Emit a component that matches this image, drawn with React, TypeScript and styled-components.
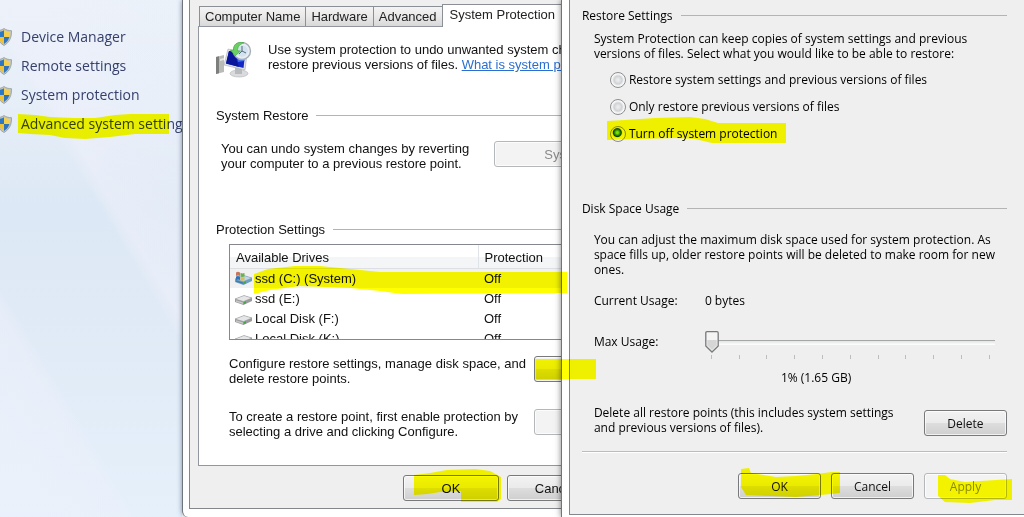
import React, { useState } from "react";
import styled, { createGlobalStyle, css } from "styled-components";

const GlobalStyle = createGlobalStyle`
  *, *::before, *::after { box-sizing: border-box; }
  html, body { margin: 0; padding: 0; background: #fff; }
  body { overflow-x: hidden; }
`;

const arial = `"Liberation Sans", Arial, sans-serif`;
const tahoma = `"Open Sans", Tahoma, sans-serif`;
const segoe = `"Open Sans", "Segoe UI", sans-serif`;

const Desktop = styled.div`
  display: grid;
  grid-template-columns: 182px minmax(0, 9fr) minmax(0, 11fr);
  min-height: 100vh;
  overflow: hidden;
`;

/* ---------- highlighter strokes ---------- */

const Stroke = styled.svg<{ $x: number; $y: number }>`
  position: absolute;
  left: ${(p) => p.$x}px;
  top: ${(p) => p.$y}px;
  z-index: 3;
  mix-blend-mode: multiply;
  pointer-events: none;
`;

function Highlight({ x, y, w, h, points }: { x: number; y: number; w: number; h: number; points: string }) {
  return (
    <Stroke $x={x} $y={y} width={w} height={h} viewBox={`0 0 ${w} ${h}`} aria-hidden="true">
      <polygon points={points} fill="#ffff00" />
    </Stroke>
  );
}

/* ---------- control panel sidebar ---------- */

const Sidebar = styled.nav`
  padding: 22px 0 0;
  background:
    linear-gradient(59deg, rgba(236, 241, 251, 0.8) 10%, rgba(236, 240, 250, 0.6) 25%, transparent 28%, transparent 58%, rgba(238, 240, 250, 0.6) 61%, rgba(238, 242, 251, 0.2) 90%),
    linear-gradient(180deg, #ebf1f9 0%, #e6eef8 20%, #dce8f5 40%, #e0eaf6 60%, #e5f0fb 100%);
  font-family: ${segoe};
`;

const TaskList = styled.ul`
  list-style: none;
  margin: 0;
  padding: 0;
`;

const Task = styled.li`
  position: relative;
  display: flex;
  align-items: center;
  gap: 9px;
  height: 29px;

  svg:first-child {
    flex: none;
    margin-left: -4px;
  }
`;

const TaskLink = styled.a`
  color: #35406c;
  font-size: 14px;
  line-height: 20px;
  text-decoration: none;
  white-space: nowrap;
`;

function Shield() {
  return (
    <svg width="16" height="18" viewBox="0 0 16 18" aria-hidden="true">
      <path d="M8 .5 C10 2 12.500 2.600 15.500 2.700 C15.700 9 14 14 8 17.500 C2 14 .3 9 .5 2.700 C3.500 2.600 6 2 8 .5Z" fill="#c4c6be" stroke="#8d938f" strokeWidth=".7" />
      <path d="M8 2.200 C6.200 3.400 4.300 4 2 4.100 C2 6 2.100 7.500 2.600 9 H8Z" fill="#2d78c4" />
      <path d="M8 2.200 C9.800 3.400 11.700 4 14 4.100 C14 6 13.900 7.500 13.400 9 H8Z" fill="#f4d04e" />
      <path d="M2.600 9 C3.400 12 5 14.200 8 16 V9Z" fill="#f0c238" />
      <path d="M13.400 9 C12.600 12 11 14.200 8 16 V9Z" fill="#2f73bd" />
    </svg>
  );
}

/* ---------- window frames ---------- */

const Frame = styled.section<{ $front?: boolean }>`
  position: relative;
  background: #fff;
  border-left: 1px solid #6f757c;
  font-size: 13px;
  line-height: 15px;
  color: #111;
  ${(p) =>
    p.$front
      ? css`
          z-index: 2;
          padding: 0 0 2px 7px;
          box-shadow: 0 0 6px rgba(0, 0, 0, 0.5);
          font-family: ${tahoma};
          font-size: 12px;
          color: #000;
        `
      : css`
          padding: 0 0 7px 6px;
          border-bottom-left-radius: 6px;
          box-shadow: 0 0 5px rgba(50, 70, 100, 0.6);
          font-family: ${arial};
        `}
`;

const Client = styled.div<{ $inset?: boolean }>`
  background: #efefef;
  border-left: 1px solid #83868a;
  border-bottom: 1px solid #83868a;
  ${(p) =>
    p.$inset
      ? css`
          padding: 8px 17px 15px 12px;
        `
      : css`
          padding: 4px 0 7px 8px;
        `}
`;

/* The property sheet continues underneath the window in front of it. */
const Sheet = styled.div`
  width: calc(100% + 138px);
`;

const Tabs = styled.div`
  display: flex;
  align-items: flex-end;
  padding-left: 1px;
`;

const Tab = styled.button<{ $active?: boolean }>`
  height: 20px;
  margin: 0 -1px 0 0;
  padding: 0 5px;
  border: 1px solid #8b8f96;
  border-bottom: 0;
  background: linear-gradient(#f3f3f3, #e9e9e9 50%, #d8d8d8);
  font: 13px/18px ${arial};
  color: #222;
  white-space: nowrap;
  ${(p) =>
    p.$active &&
    css`
      position: relative;
      z-index: 1;
      height: 23px;
      margin-bottom: -1px;
      padding: 0 7px 2px;
      background: #fff;
    `}
`;

const TabPage = styled.div`
  padding: 15px 0 26px 17px;
  background: #fff;
  border: 1px solid #9296a0;
`;

const Intro = styled.div`
  display: flex;
  gap: 16px;
  white-space: nowrap;

  svg { flex: none; }
  p { margin: 0; }
  a { color: #2a6fd0; }
`;

const GroupTitle = styled.h2<{ $gap: number }>`
  display: flex;
  align-items: center;
  gap: 8px;
  margin: 0;
  padding-top: ${(p) => p.$gap}px;
  font-size: inherit;
  font-weight: normal;
  white-space: nowrap;

  &::after {
    content: "";
    flex: 1;
    height: 1px;
    background: #b4b4b4;
  }
`;

const ActionRow = styled.div<{ $indent: number; $gap: number; $align: "start" | "end" }>`
  display: flex;
  justify-content: space-between;
  align-items: flex-${(p) => p.$align};
  padding: ${(p) => p.$gap}px 0 0 ${(p) => p.$indent}px;

  p {
    margin: 0;
    white-space: nowrap;
  }
  button { margin-bottom: -1px; }
`;

const Button = styled.button<{ $wide?: boolean }>`
  position: relative;
  flex: none;
  width: ${(p) => (p.$wide ? 96 : 83)}px;
  height: 26px;
  padding: 0;
  border: 1px solid #77797b;
  border-radius: 3px;
  background: linear-gradient(#f2f2f2, #ebebeb 48%, #dddddd 52%, #cfcfcf);
  box-shadow: inset 0 0 0 1px rgba(255, 255, 255, 0.7);
  font: inherit;
  color: #111;

  &:disabled {
    border-color: #b5b8ba;
    background: #f3f3f3;
    color: #8a8a8a;
  }
`;

const RestoreButton = styled(Button)`
  width: 204px;
`;

const ConfigureButton = styled(Button)`
  width: 164px;
`;

const SheetButtons = styled.div`
  display: flex;
  gap: 8px;
  padding: 9px 0 0 205px;
`;

/* ---------- drives ---------- */

const DriveBox = styled.div`
  height: 96px;
  margin: 7px 0 0 13px;
  overflow: hidden;
  border: 1px solid #85898f;
`;

const DriveTable = styled.table`
  width: 100%;
  border-collapse: collapse;
  table-layout: fixed;

  th {
    height: 23px;
    padding: 2px 0 0 6px;
    background: linear-gradient(#fff 50%, #f4f5f7 51%);
    border-bottom: 1px solid #dcdfe3;
    font-weight: normal;
    text-align: left;
  }
  th:first-child { width: 248px; border-right: 1px solid #e0e3e8; }
  td { height: 20px; padding: 0 0 0 6px; white-space: nowrap; }
`;

const DriveRow = styled.tr<{ $selected?: boolean }>`
  background: ${(p) => (p.$selected ? "#f1f1f1" : "#fff")};
`;

const DriveName = styled.span`
  position: relative;
  display: flex;
  align-items: center;
  gap: 2px;
  margin-left: -2px;
`;

function DriveIcon({ system }: { system?: boolean }) {
  return (
    <svg width="19" height="16" viewBox="0 0 19 16" aria-hidden="true">
      <path d="M1 9 L10 5.500 L18 8 V11 L9.500 15 L1 12Z" fill={system ? "#6c9fc4" : "#9b9b9b"} />
      <path d="M1 9 L10 5.500 L18 8 L9.500 11.500Z" fill={system ? "#b9d9ec" : "#e6e6e6"} stroke="#8b949a" strokeWidth=".5" />
      <path d="M2 10.300 L9.300 12.500 V14 L2 11.700Z" fill={system ? "#3f7cae" : "#c9c9c9"} />
      <path d="M9.500 12.200 L12 11.200 V13.200 L9.500 14.300Z" fill="#41a845" />
      {system && (
        <>
          <path d="M2 2.500 Q4 1.200 6 2.500 V6 Q4 5 2 6Z" fill="#c9775a" />
          <path d="M6.500 2.800 Q8.500 4 10.500 3 V6.500 Q8.500 7.400 6.500 6.300Z" fill="#6fae52" />
          <path d="M2 6.500 Q4 5.500 6 6.500 V10 Q4 9 2 10Z" fill="#2f74bb" />
          <path d="M6.500 6.800 Q8.500 8 10.500 7 V10.300 Q8.500 11 6.500 10.200Z" fill="#d9bb5c" />
        </>
      )}
    </svg>
  );
}

function RestoreIcon() {
  return (
    <svg width="36" height="36" viewBox="0 0 36 36" aria-hidden="true">
      <path d="M0 15 L8 13 V30 L0 32Z" fill="#b9bbb8" />
      <path d="M0 15 L3 14.300 V31.200 L0 32Z" fill="#7c7f7c" />
      <path d="M4 17 L8 16 V18 L4 19Z" fill="#e4e4e4" />
      <ellipse cx="23" cy="31.500" rx="9" ry="3.500" fill="#d9dbdc" stroke="#a4a7a9" strokeWidth=".5" />
      <path d="M19 25 L26 27 V32 H19Z" fill="#b8bbbd" />
      <path d="M12 7 L31 12 L29 28 L8 23Z" fill="#dfe2e5" stroke="#a7abb0" strokeWidth=".6" />
      <path d="M13 9 L29 13 L27.500 26 L10 21.500Z" fill="#1226c4" />
      <path d="M13 9 L18 10 L23 25 L10 21.500Z" fill="#0a159a" />
      <path d="M20 11 L29 13 L28 19 L22 20Z" fill="#3f6ff0" />
      <circle cx="26" cy="9" r="8.500" fill="#e6eef3" stroke="#a5afb5" strokeWidth="1.400" />
      <circle cx="26" cy="9" r="5.800" fill="#d2e2ee" />
      <path d="M26 4 V9 L30 11 M26 9 L23 12" stroke="#55697c" strokeWidth="1" fill="none" />
      <path d="M28 .8 C21 -1 17 3 17.500 8 L14.500 8 L19 14 L24.500 9 L21.500 8.700 C21.500 5 23 2.500 28 .8Z" fill="#6bcf62" stroke="#41a345" strokeWidth=".6" />
    </svg>
  );
}

const drives = [
  { name: "ssd (C:) (System)", state: "Off", system: true },
  { name: "ssd (E:)", state: "Off" },
  { name: "Local Disk (F:)", state: "Off" },
  { name: "Local Disk (K:)", state: "Off" },
];

/* ---------- restore settings ---------- */

const Copy = styled.p<{ $gap: number }>`
  margin: 0;
  padding: ${(p) => p.$gap}px 0 0 12px;
  white-space: nowrap;
`;

const Options = styled.div`
  padding: 5px 0 0 28px;
`;

const Option = styled.label`
  position: relative;
  display: flex;
  align-items: center;
  gap: 3px;
  height: 27px;
`;

const Radio = styled.input`
  appearance: none;
  width: 16px;
  height: 16px;
  margin: 0;
  border: 1px solid #8b8d8f;
  border-radius: 50%;
  background: radial-gradient(circle at 50% 50%, #ebebeb 0 1px, #cfd2d5 4px, #f8f8f8 6px);

  &:checked {
    background: radial-gradient(circle at 45% 40%, #7be05a 0 1px, #1f7d14 3px, #0c3c08 4px, #e8e8e8 5px, #f5f5f5 6px);
  }
`;

const Field = styled.div<{ $gap: number }>`
  display: grid;
  grid-template-columns: 111px minmax(0, 1fr);
  padding: ${(p) => p.$gap}px 12px 0;
`;

const SliderBox = styled.div`
  position: relative;
  height: 30px;
`;

const Range = styled.input`
  display: block;
  appearance: none;
  width: 100%;
  height: 16px;
  margin: 0;
  background: linear-gradient(#a4a6a8, #a4a6a8) 0 6px / 100% 1px no-repeat,
    linear-gradient(#e3e6e6, #ffffff) 0 7px / 100% 4px no-repeat;

  &::-webkit-slider-thumb {
    appearance: none;
    width: 14px;
    height: 22px;
    opacity: 0;
  }
`;

const Thumb = styled.svg`
  position: absolute;
  top: -3px;
  pointer-events: none;
`;

const Ticks = styled.div`
  display: flex;
  justify-content: space-between;
  padding: 5px 5px 0 6px;

  i {
    width: 1px;
    height: 4px;
    background: #bdbdbd;
  }
`;

const Readout = styled.output`
  display: block;
  padding: 6px 0 0 199px;
`;

const Divider = styled.hr`
  margin: 16px 0 0;
  border: 0;
  border-top: 1px solid #bcbcbc;
  border-bottom: 1px solid #fff;
`;

const DialogButtons = styled.div`
  display: flex;
  justify-content: flex-end;
  gap: 10px;
  padding-top: 20px;
`;

const options = [
  "Restore system settings and previous versions of files",
  "Only restore previous versions of files",
  "Turn off system protection",
];

export default function App() {
  const [choice, setChoice] = useState(2);
  const [usage, setUsage] = useState(1);

  return (
    <>
      <GlobalStyle />
      <Desktop>
        <Sidebar>
          <TaskList>
            {["Device Manager", "Remote settings", "System protection", "Advanced system settings"].map((t, i) => (
              <Task key={t}>
                <Shield />
                <TaskLink href="#">{t}</TaskLink>
                {i === 3 && (
                  <Highlight x={18} y={5} w={152} h={26} points="0,0 17,1 32,3 57,4 77,4 97,1 112,0 151,0 151,20 117,20 92,23 67,25 47,24 32,21 12,20 0,19" />
                )}
              </Task>
            ))}
          </TaskList>
        </Sidebar>

        <Frame>
          <Client>
            <Sheet>
              <Tabs>
                <Tab>Computer Name</Tab>
                <Tab>Hardware</Tab>
                <Tab>Advanced</Tab>
                <Tab $active>System Protection</Tab>
              </Tabs>
              <TabPage>
                <Intro>
                  <RestoreIcon />
                  <p>
                    Use system protection to undo unwanted system changes and
                    <br />
                    restore previous versions of files. <a href="#">What is system protection?</a>
                  </p>
                </Intro>
                <GroupTitle $gap={30}>System Restore</GroupTitle>
                <ActionRow $indent={5} $gap={18} $align="start">
                  <p>
                    You can undo system changes by reverting
                    <br />
                    your computer to a previous restore point.
                  </p>
                  <RestoreButton disabled>System Restore...</RestoreButton>
                </ActionRow>
                <GroupTitle $gap={51}>Protection Settings</GroupTitle>
                <DriveBox>
                  <DriveTable>
                    <thead>
                      <tr>
                        <th>Available Drives</th>
                        <th>Protection</th>
                      </tr>
                    </thead>
                    <tbody>
                      {drives.map((d) => (
                        <DriveRow key={d.name} $selected={d.system}>
                          <td>
                            <DriveName>
                              <DriveIcon system={d.system} />
                              {d.name}
                              {d.system && (
                                <Highlight x={20} y={-4} w={313} h={28} points="0,8 14,3 41,0 66,0 96,3 126,6 313,6 313,27 148,28 126,25 96,22 46,20 16,24 0,28" />
                              )}
                            </DriveName>
                          </td>
                          <td>{d.state}</td>
                        </DriveRow>
                      ))}
                    </tbody>
                  </DriveTable>
                </DriveBox>
                <ActionRow $indent={13} $gap={16} $align="start">
                  <p>
                    Configure restore settings, manage disk space, and
                    <br />
                    delete restore points.
                  </p>
                  <ConfigureButton aria-label="Configure">
                    <Highlight x={0} y={2} w={61} h={20} points="0,0 61,0 61,20 0,20" />
                  </ConfigureButton>
                </ActionRow>
                <ActionRow $indent={13} $gap={23} $align="start">
                  <p>
                    To create a restore point, first enable protection by
                    <br />
                    selecting a drive and clicking Configure.
                  </p>
                  <ConfigureButton disabled aria-label="Create" />
                </ActionRow>
              </TabPage>
              <SheetButtons>
                <Button $wide>
                  OK
                  <Highlight x={10} y={-7} w={88} h={34} points="0,6 16,4 33,1 61,0 76,2 85,7 87,8 87,30 83,33 47,33 47,22 26,23 14,25 0,26" />
                </Button>
                <Button $wide>Cancel</Button>
              </SheetButtons>
            </Sheet>
          </Client>
        </Frame>

        <Frame $front>
          <Client $inset>
            <GroupTitle $gap={0}>Restore Settings</GroupTitle>
            <Copy $gap={8}>
              System Protection can keep copies of system settings and previous
              <br />
              versions of files. Select what you would like to be able to restore:
            </Copy>
            <Options>
              {options.map((o, i) => (
                <Option key={o}>
                  <Radio type="radio" name="restore" checked={choice === i} onChange={() => setChoice(i)} />
                  {o}
                  {i === 2 && (
                    <Highlight x={-3} y={-3} w={179} h={27} points="0,4 18,3 48,1 83,0 98,2 111,6 179,6 179,26 105,26 88,22 68,21 33,22 0,23" />
                  )}
                </Option>
              ))}
            </Options>
            <GroupTitle $gap={54}>Disk Space Usage</GroupTitle>
            <Copy $gap={16}>
              You can adjust the maximum disk space used for system protection. As
              <br />
              space fills up, older restore points will be deleted to make room for new
              <br />
              ones.
            </Copy>
            <Field $gap={16}>
              <span>Current Usage:</span>
              <span>0 bytes</span>
            </Field>
            <Field $gap={26}>
              <label htmlFor="max-usage">Max Usage:</label>
              <SliderBox>
                <Range id="max-usage" type="range" min={1} max={100} value={usage} onChange={(e) => setUsage(Number(e.target.value))} />
                <Thumb width="14" height="22" viewBox="0 0 14 22" aria-hidden="true" style={{ left: `calc((100% - 14px) * ${(usage - 1) / 99})` }}>
                  <path d="M2 .7 H12 Q13.200 .7 13.200 2 V15 L7 21 L.8 15 V2 Q.8 .7 2 .7Z" fill="#f4f4f4" stroke="#77797b" strokeWidth="1.300" />
                  <path d="M2.300 9 H11.700 V14.300 L7 19 L2.300 14.300Z" fill="#d6d6d6" />
                </Thumb>
                <Ticks>
                  {Array.from({ length: 11 }, (_, i) => (
                    <i key={i} />
                  ))}
                </Ticks>
              </SliderBox>
            </Field>
            <Readout htmlFor="max-usage">{usage}% (1.65 GB)</Readout>
            <ActionRow $indent={12} $gap={20} $align="end">
              <p>
                Delete all restore points (this includes system settings
                <br />
                and previous versions of files).
              </p>
              <Button>Delete</Button>
            </ActionRow>
            <Divider />
            <DialogButtons>
              <Button>
                OK
                <Highlight x={2} y={-6} w={100} h={30} points="0,1 8,0 10,5 35,9 55,8 75,6 91,4 99,4 99,25 80,27 55,29 30,28 5,27 0,19" />
              </Button>
              <Button>Cancel</Button>
              <Button disabled>
                Apply
                <Highlight x={13} y={1} w={75} h={29} points="0,0 7,0 12,4 27,7 42,6 74,4 74,25 57,25 32,28 7,27 0,21" />
              </Button>
            </DialogButtons>
          </Client>
        </Frame>
      </Desktop>
    </>
  );
}
